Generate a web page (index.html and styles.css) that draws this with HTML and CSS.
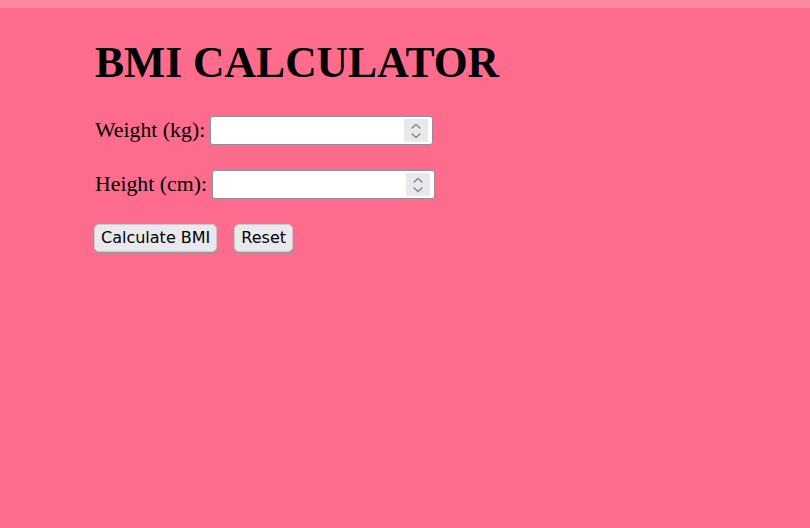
FILE: index.html
```html
<!DOCTYPE html>
<html>
<head>
<meta charset="utf-8">
<link rel="stylesheet" href="styles.css">
</head>
<body>
<div class="topbar"></div>
<main class="calc">
  <h1 class="title">BMI CALCULATOR</h1>
  <div class="row">
    <label class="label">Weight (kg):</label>
    <div class="field">
      <input class="field-input" type="text">
      <span class="spin">
        <svg width="12" height="18" viewBox="0 0 12 18"><path d="M2 6 L6 2.5 L10 6 M2 12 L6 15.5 L10 12" fill="none" stroke="#8a8a93" stroke-width="1.6" stroke-linecap="round" stroke-linejoin="round"/></svg>
      </span>
    </div>
  </div>
  <div class="row">
    <label class="label">Height (cm):</label>
    <div class="field">
      <input class="field-input" type="text">
      <span class="spin">
        <svg width="12" height="18" viewBox="0 0 12 18"><path d="M2 6 L6 2.5 L10 6 M2 12 L6 15.5 L10 12" fill="none" stroke="#8a8a93" stroke-width="1.6" stroke-linecap="round" stroke-linejoin="round"/></svg>
      </span>
    </div>
  </div>
  <div class="actions">
    <button class="btn">Calculate BMI</button>
    <button class="btn">Reset</button>
  </div>
</main>
</body>
</html>
```

FILE: styles.css
```css
html, body {
  margin: 0;
  padding: 0;
  background: #fe6c8d;
  height: 100%;
}
body {
  font-family: "Liberation Serif", "Times New Roman", serif;
  color: #000;
}
.topbar {
  height: 8px;
  background: #fb8a9e;
}
.calc {
  padding: 0 0 0 95px;
}
.title {
  margin: 0;
  padding-top: 29px;
  font-size: 43.6px;
  line-height: 50px;
  font-weight: bold;
}
.row {
  display: flex;
  align-items: center;
  gap: 5px;
  height: 29px;
}
.row + .row {
  margin-top: 25px;
}
.title + .row {
  margin-top: 29px;
}
.label {
  font-size: 21.8px;
  line-height: 29px;
}
.field {
  box-sizing: border-box;
  width: 223px;
  height: 29px;
  display: flex;
  align-items: center;
  background: #fff;
  border: 1px solid #8f8f9d;
  border-radius: 3px;
  padding: 2px 4px 2px 2px;
}
.field-input {
  flex: 1;
  min-width: 0;
  border: 0;
  outline: none;
  background: transparent;
  font-size: 16px;
}
.spin {
  width: 24px;
  height: 23px;
  background: #e9e9ed;
  display: flex;
  align-items: center;
  justify-content: center;
}
.actions {
  margin-top: 25px;
  margin-left: -1px;
  display: flex;
  gap: 17px;
}
.btn {
  margin: 0;
  font-family: "DejaVu Sans", Tahoma, sans-serif;
  font-size: 16px;
  line-height: 20px;
  padding: 3px 6px;
  background: #e9e9ed;
  border: 1px solid #c9c9cf;
  border-radius: 5px;
  box-shadow: 1px 2px 1px #9a9a9a;
  color: #000;
}
```
